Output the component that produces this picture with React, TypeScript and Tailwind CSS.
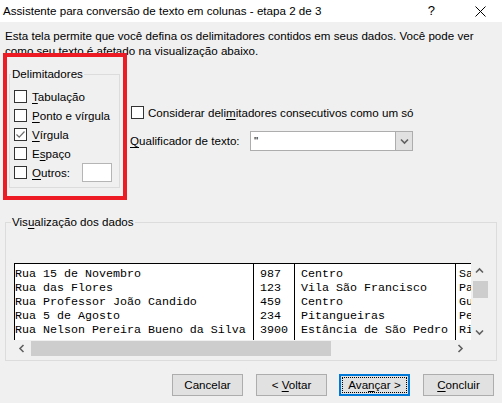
import type { ReactNode } from "react"

function Box({ checked = false }: { checked?: boolean }) {
  return (
    <span className="flex h-[13px] w-[13px] shrink-0 items-center justify-center border border-[#333333] bg-white">
      {checked && (
        <svg width="11" height="11" viewBox="0 0 11 11">
          <path d="M1.5 5.5 L4.2 8.2 L9.5 2.5" fill="none" stroke="#6d6d6d" strokeWidth="1.2" />
        </svg>
      )}
    </span>
  )
}

function Key({ children }: { children: ReactNode }) {
  return <span className="underline underline-offset-2">{children}</span>
}

function Chevron({ dir }: { dir: "up" | "down" | "left" | "right" }) {
  const d = {
    up: "M1 5.5 L4.5 2 L8 5.5",
    down: "M1 2.5 L4.5 6 L8 2.5",
    left: "M5.5 1 L2 4.5 L5.5 8",
    right: "M2.5 1 L6 4.5 L2.5 8",
  }[dir]
  return (
    <svg width="9" height="9" viewBox="0 0 9 9">
      <path d={d} fill="none" stroke="#606060" strokeWidth="1.6" />
    </svg>
  )
}

const rows = [
  ["Rua 15 de Novembro", "987", "Centro", "Sa"],
  ["Rua das Flores", "123", "Vila São Francisco", "Pa"],
  ["Rua Professor João Candido", "459", "Centro", "Gu"],
  ["Rua 5 de Agosto", "234", "Pitangueiras", "Pe"],
  ["Rua Nelson Pereira Bueno da Silva", "3900", "Estância de São Pedro", "Ri"],
]

function Col({ idx, className }: { idx: number; className: string }) {
  return (
    <div className={`h-full shrink-0 overflow-hidden whitespace-pre pt-[3px] leading-[14px] ${className}`}>
      {rows.map((r, i) => (
        <div key={i}>{r[idx]}</div>
      ))}
    </div>
  )
}

function Button({ children, focused = false }: { children: ReactNode; focused?: boolean }) {
  return (
    <div
      className={`relative flex h-[22px] w-[71px] items-center justify-center bg-[#e1e1e1] ${
        focused ? "border-2 border-[#0078d7]" : "border border-[#adadad]"
      }`}
    >
      {focused && <span className="absolute inset-[1px] border border-dotted border-black" />}
      <span className="relative">{children}</span>
    </div>
  )
}

export default function App() {
  const delims: { label: ReactNode; checked?: boolean }[] = [
    { label: <><Key>T</Key>abulação</> },
    { label: <><Key>P</Key>onto e vírgula</> },
    { label: <><Key>V</Key>írgula</>, checked: true },
    { label: <>E<Key>s</Key>paço</> },
  ]

  return (
    <div className="h-[403px] w-[502px] overflow-hidden bg-[#f0f0f0] font-['Liberation_Sans',Arial,sans-serif] text-[11.6px] text-black">
      {/* title bar */}
      <div className="flex h-[22px] items-center bg-white pl-[3px]">
        <span>Assistente para conversão de texto em colunas - etapa 2 de 3</span>
        <span className="ml-auto mr-[40px] text-[13px]">?</span>
        <svg className="mr-[16px]" width="11" height="11" viewBox="0 0 11 11">
          <path d="M0.5 0.5 L10.5 10.5 M10.5 0.5 L0.5 10.5" stroke="#000" strokeWidth="1" />
        </svg>
      </div>

      <div className="h-[31px] px-[5px] pt-[6px] leading-[15px]">
        Esta tela permite que você defina os delimitadores contidos em seus dados. Você pode ver
        <br />
        como seu texto é afetado na visualização abaixo.
      </div>

      <div className="flex">
        {/* highlighted delimiters group */}
        <div className="relative ml-[3px] h-[147px] w-[124px] border-4 border-[#ed1c24]">
          <div className="relative ml-[2px] mt-[17px] h-[114px] w-[111px] border border-[#dcdcdc] pl-[4px] pt-[12px]">
            <span className="absolute left-[1px] top-[-9px] bg-[#f0f0f0] px-[1px] leading-[16px]">Delimitadores</span>
            {delims.map((d, i) => (
              <div key={i} className="flex h-[19px] items-center gap-[5px]">
                <Box checked={d.checked} />
                <span>{d.label}</span>
              </div>
            ))}
            <div className="flex h-[19px] items-center gap-[5px]">
              <Box />
              <span className="w-[45px]">
                <Key>O</Key>utros:
              </span>
              <span className="h-[19px] w-[30px] border border-[#b5b5b5] bg-white" />
            </div>
          </div>
        </div>

        {/* right options */}
        <div className="pt-[50px]">
          <div className="ml-[4px] flex h-[19px] items-center gap-[4px]">
            <Box />
            <span>
              Considerar deli<Key>m</Key>itadores consecutivos como um só
            </span>
          </div>
          <div className="ml-[3px] mt-[9px] flex h-[20px] items-center">
            <span className="w-[120px]">
              <Key>Q</Key>ualificador de texto:
            </span>
            <div className="flex h-[20px] w-[163px] border border-[#adadad] bg-white">
              <span className="flex-1 pl-[3px] leading-[18px]">"</span>
              <span className="flex w-[17px] items-center justify-center border-l border-[#adadad] bg-[#e1e1e1]">
                <Chevron dir="down" />
              </span>
            </div>
          </div>
        </div>
      </div>

      {/* data preview group */}
      <div className="relative ml-[5px] mt-[22px] h-[139px] w-[492px] border border-[#dcdcdc]">
        <span className="absolute left-[5px] top-[-9px] bg-[#f0f0f0] px-[1px] leading-[16px]">
          Vis<Key>u</Key>alização dos dados
        </span>
        <div className="ml-[8px] mt-[40px] flex">
          <div className="w-[457px] shrink-0">
            <div className="flex h-[77px] border-l border-t border-black bg-white font-['Liberation_Mono','Courier_New',monospace] text-[11.67px]">
              <Col idx={0} className="w-[238px]" />
              <Col idx={1} className="w-[41px] border-l border-black pl-[6px]" />
              <Col idx={2} className="w-[161px] border-l border-black pl-[6px]" />
              <Col idx={3} className="w-[16px] border-l border-black pl-[3px]" />
            </div>
            <div className="flex h-[17px] items-center">
              <span className="flex w-[17px] justify-center">
                <Chevron dir="left" />
              </span>
              <span className="h-[15px] w-[300px] bg-[#cdcdcd]" />
              <span className="ml-auto flex w-[22px] justify-center">
                <Chevron dir="right" />
              </span>
            </div>
          </div>
          <div className="flex h-[77px] w-[17px] shrink-0 flex-col items-center pt-[1px]">
            <span className="flex h-[15px] items-center">
              <Chevron dir="up" />
            </span>
            <span className="ml-[2px] mt-[2px] h-[17px] w-[15px] bg-[#cdcdcd]" />
            <span className="mt-auto flex h-[16px] items-center">
              <Chevron dir="down" />
            </span>
          </div>
        </div>
      </div>

      {/* buttons */}
      <div className="ml-[172px] mt-[13px] flex">
        <Button>Cancelar</Button>
        <div className="ml-[13px]">
          <Button>
            &lt; <Key>V</Key>oltar
          </Button>
        </div>
        <div className="ml-[12px]">
          <Button focused>
            Ava<Key>n</Key>çar &gt;
          </Button>
        </div>
        <div className="ml-[13px]">
          <Button>
            <Key>C</Key>oncluir
          </Button>
        </div>
      </div>
    </div>
  )
}
